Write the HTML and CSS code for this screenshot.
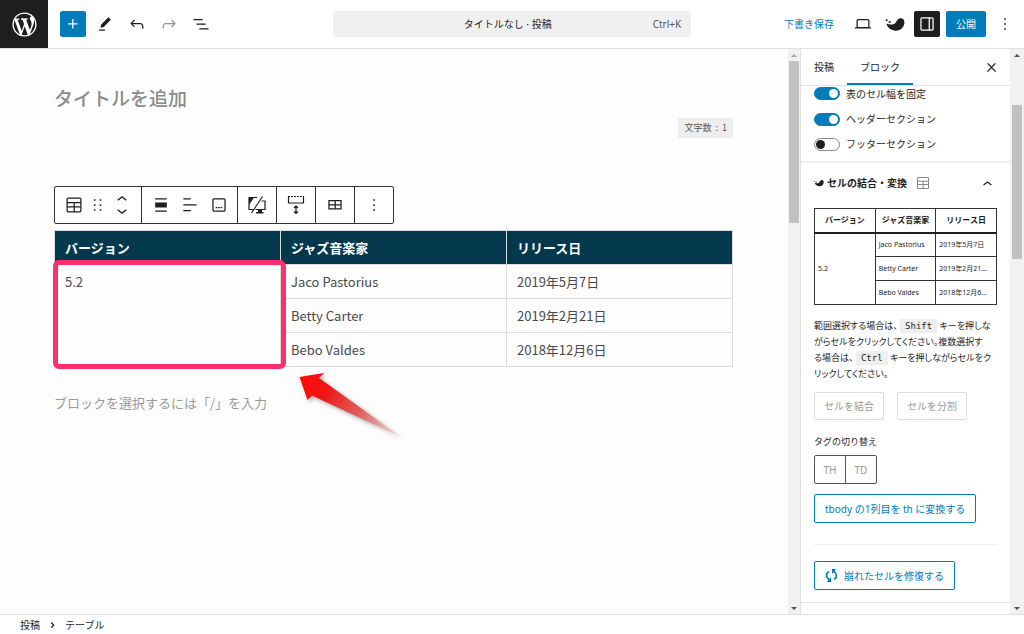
FILE: index.html
```html
<!DOCTYPE html>
<html lang="ja">
<head>
<meta charset="utf-8">
<meta name="viewport" content="width=device-width, initial-scale=1">
<title>タイトルなし · 投稿</title>
<link rel="stylesheet" href="styles.css">
</head>
<body>
<svg class="defs" aria-hidden="true">
  <symbol id="i-table" viewBox="0 0 24 24"><path d="M19 3H5c-1.1 0-2 .9-2 2v14c0 1.1.9 2 2 2h14c1.1 0 2-.9 2-2V5c0-1.1-.9-2-2-2zM5 4.500h14c.3 0 .5.2.5.5v3.500h-15V5c0-.3.2-.5.5-.5zm8 5.500h6.500v3.500H13V10zm-1.500 3.500h-7V10h7v3.500zm-7 5.500v-4h7v4.500H5c-.3 0-.5-.2-.5-.5zm14.500.5h-6V15h6.500v4c0 .3-.2.5-.5.5z"/></symbol>
  <symbol id="i-more" viewBox="0 0 24 24"><path d="M13 19h-2v-2h2v2zm0-6h-2v-2h2v2zm0-6h-2V5h2v2z"/></symbol>
  <symbol id="i-bird" viewBox="0 0 24 24"><path d="M1.500 11.500c4.500 1.800 8.500 1.600 11-.8 1.500-1.700 1.800-4 4.500-5.200 3.300-1.300 6.300.6 6.300 4.500 0 5.500-4.300 10-10.300 10C7.500 20 3.200 16.800 1.500 11.500z"/><circle cx="2" cy="7.500" r="1.200"/><circle cx="5.600" cy="9.600" r="1.300"/></symbol>
</svg>

<header class="topbar">
  <div class="topbar-side">
    <a class="logo" href="#" aria-label="投稿一覧"><svg viewBox="-2 -2 24 24"><path d="M20 10c0-5.510-4.490-10-10-10C4.480 0 0 4.490 0 10c0 5.520 4.480 10 10 10 5.510 0 10-4.480 10-10zM7.780 15.370L4.370 6.220c.55-.02 1.170-.08 1.170-.08.5-.06.44-1.130-.06-1.110 0 0-1.450.11-2.370.11-.18 0-.37 0-.58-.01C4.120 2.690 6.870 1.110 10 1.110c2.330 0 4.450.87 6.050 2.340-.68-.11-1.650.39-1.650 1.580 0 .74.45 1.360.9 2.100.35.61.55 1.360.55 2.460 0 1.490-1.400 5-1.400 5l-3.030-8.370c.54-.02.82-.17.82-.17.5-.05.44-1.250-.06-1.220 0 0-1.440.12-2.380.12-.87 0-2.330-.12-2.330-.12-.5-.03-.56 1.200-.06 1.220l.92.08 1.260 3.410zM17.410 10c.24-.64.74-1.870.43-4.250.7 1.290 1.050 2.710 1.050 4.250 0 3.290-1.730 6.240-4.400 7.780.97-2.590 1.940-5.200 2.920-7.780zM6.100 18.090C3.120 16.650 1.110 13.530 1.110 10c0-1.300.23-2.480.72-3.590C3.250 10.300 4.670 14.200 6.100 18.090zm4.030-6.630l2.580 6.980c-.86.29-1.760.45-2.710.45-.79 0-1.570-.11-2.290-.33.81-2.380 1.620-4.740 2.420-7.100z"/></svg></a>
    <div class="tools">
      <button class="icon-btn primary" aria-label="ブロックを追加"><svg class="icon" viewBox="0 0 24 24"><path d="M11 12.500V17.500H12.500V12.500H17.500V11H12.500V6H11V11H6V12.500H11Z"/></svg></button>
      <button class="icon-btn" aria-label="ツール"><svg class="icon" viewBox="0 0 24 24"><path d="m19 7-3-3-8.500 8.500-1 4 4-1L19 7Zm-7 11.500H5V20h7v-1.500Z"/></svg></button>
      <button class="icon-btn" aria-label="元に戻す"><svg class="icon" viewBox="0 0 24 24"><path d="M18.300 11.700c-.6-.6-1.400-.9-2.300-.9H6.700l2.900-3.300-1.100-1-4.500 5L8.500 16l1-1-2.700-2.700H16c.5 0 .9.2 1.300.5 1 1 1 3.400 1 4.500v.3h1.500v-.2c0-1.500 0-4.300-1.500-5.700z"/></svg></button>
      <button class="icon-btn dim" aria-label="やり直す" disabled><svg class="icon" viewBox="0 0 24 24"><path d="M15.600 6.500l-1.100 1 2.900 3.300H8c-.9 0-1.700.3-2.300.9-1.400 1.500-1.400 4.200-1.400 5.600v.2h1.500v-.3c0-1.100 0-3.500 1-4.500.3-.3.7-.5 1.300-.5h9.200L14.500 15l1.100 1.100 4.600-4.600-4.600-5z"/></svg></button>
      <button class="icon-btn" aria-label="リスト表示"><svg class="icon" viewBox="0 0 24 24"><path d="M3 6h11v1.500H3V6Zm3.500 5.500h11V13h-11v-1.500ZM21 17H10v1.500h11V17Z"/></svg></button>
    </div>
  </div>
  <button class="doc-bar"><span class="doc-title">タイトルなし · 投稿</span><span class="doc-key">Ctrl+K</span></button>
  <div class="topbar-side topbar-end">
    <button class="save">下書き保存</button>
    <button class="icon-btn" aria-label="表示"><svg class="icon" viewBox="0 0 24 24"><path d="M20.500 16h-.7V8c0-1.100-.9-2-2-2H6.200c-1.100 0-2 .9-2 2v8h-.7c-.8 0-1.500.7-1.500 1.500h20c0-.8-.7-1.500-1.500-1.500zM5.700 8c0-.3.2-.5.5-.5h11.600c.3 0 .5.2.5.5v7.600H5.700V8z"/></svg></button>
    <button class="icon-btn" aria-label="SWELL設定"><svg class="icon"><use href="#i-bird"/></svg></button>
    <button class="icon-btn active" aria-label="設定"><svg class="icon" viewBox="0 0 24 24"><path d="M18 4H6c-1.100 0-2 .9-2 2v12c0 1.100.9 2 2 2h12c1.100 0 2-.9 2-2V6c0-1.100-.9-2-2-2zm-4 14.500H6c-.3 0-.5-.2-.5-.5V6c0-.3.2-.5.5-.5h8v13zm4.500-.5c0 .3-.2.5-.5.5h-2.500v-13H18c.3 0 .5.2.5.5v12z"/></svg></button>
    <button class="publish">公開</button>
    <button class="icon-btn" aria-label="オプション"><svg class="icon"><use href="#i-more"/></svg></button>
  </div>
</header>

<div class="workspace">
  <main class="canvas">
    <div class="canvas-body">
      <h1 class="post-title">タイトルを追加</h1>
      <div class="count-row"><span class="count">文字数&nbsp; :&nbsp; 1</span></div>

      <div class="block-toolbar" role="toolbar" aria-label="ブロックツール">
        <div class="group group-block">
          <button aria-label="テーブル"><svg class="icon"><use href="#i-table"/></svg></button>
          <button aria-label="ドラッグ"><svg class="icon" viewBox="0 0 24 24"><path d="M7 7h2V5H7v2zm0 6h2v-2H7v2zm0 6h2v-2H7v2zm7-14v2h2V5h-2zm0 8h2v-2h-2v2zm0 6h2v-2h-2v2z"/></svg></button>
          <div class="movers">
            <button aria-label="上に移動"><svg viewBox="5 7 14 8"><path d="M6.500 12.400L12 8l5.500 4.400-.9 1.200L12 10l-4.500 3.600-1-1.200z"/></svg></button>
            <button aria-label="下に移動"><svg viewBox="5 9 14 8"><path d="M17.500 11.600L12 16l-5.500-4.400.9-1.200L12 14l4.500-3.600 1 1.200z"/></svg></button>
          </div>
        </div>
        <div class="group group-align">
          <button aria-label="配置"><svg class="icon" viewBox="0 0 24 24"><path d="M19 5.500H5V4h14v1.500ZM19 20H5v-1.500h14V20ZM5 9h14v6H5V9Z"/></svg></button>
          <button aria-label="カラムの配置"><svg class="icon" viewBox="0 0 24 24"><path d="M13 5.500H4V4h9v1.500Zm7 7H4V11h16v1.500Zm-7 7H4V18h9v1.500Z"/></svg></button>
          <button aria-label="キャプション"><svg class="icon" viewBox="0 0 24 24"><path fill-rule="evenodd" d="M6 5.500h12a.5.5 0 0 1 .5.5v12a.5.5 0 0 1-.5.5H6a.5.5 0 0 1-.5-.5V6a.5.5 0 0 1 .5-.5ZM4 6a2 2 0 0 1 2-2h12a2 2 0 0 1 2 2v12a2 2 0 0 1-2 2H6a2 2 0 0 1-2-2V6Zm4 10h2v-1.500H8V16Zm5 0h-2v-1.500h2V16Zm1 0h2v-1.500h-2V16Z"/></svg></button>
        </div>
        <div class="group"><button aria-label="デバイス制限"><svg class="icon" viewBox="0 0 20 20"><g fill="none" stroke="currentColor" stroke-width="1.200"><path d="M10 2.500H2v12h4.500M14.500 6H18v8.500H8.500M15.500 1.500 4.500 18"/></g><path d="M2 2.500h5L2 10zM11 14.500h4V17h1.500v1.500H9V17h2z"/></svg></button></div>
        <div class="group"><button aria-label="ブロック下の余白量"><svg class="icon" viewBox="0 0 20 20"><g fill="none" stroke="currentColor" stroke-width="1.200"><path d="M2.500 2v6h15V2M10 11v7.500M8 13l2-2 2 2M8 16.500l2 2 2-2"/><path stroke-dasharray="2 1" d="M2 1.500h16"/></g></svg></button></div>
        <div class="group"><button aria-label="表を編集"><svg class="icon" viewBox="0 0 24 24"><path d="M4 6v11.500h16V6H4zm1.500 1.500h6V11h-6V7.500zm0 8.500v-3.500h6V16h-6zm13 0H13v-3.500h5.500V16zM13 11V7.500h5.500V11H13z"/></svg></button></div>
        <div class="group"><button aria-label="オプション"><svg class="icon"><use href="#i-more"/></svg></button></div>
      </div>

      <div class="table-wrap">
        <table class="data">
          <thead><tr><th>バージョン</th><th>ジャズ音楽家</th><th>リリース日</th></tr></thead>
          <tbody>
            <tr><td rowspan="3" class="marked">5.2</td><td>Jaco Pastorius</td><td>2019年5月7日</td></tr>
            <tr><td>Betty Carter</td><td>2019年2月21日</td></tr>
            <tr><td>Bebo Valdes</td><td>2018年12月6日</td></tr>
          </tbody>
        </table>
        <div class="highlight">
          <svg class="arrow" viewBox="0 0 120 76" aria-hidden="true">
            <defs><linearGradient id="fade" gradientUnits="userSpaceOnUse" x1="8" y1="10" x2="110" y2="70"><stop offset="0" stop-color="#ff0a0a"/><stop offset=".25" stop-color="#f01515"/><stop offset=".6" stop-color="#e06060"/><stop offset="1" stop-color="#f7b5b5" stop-opacity=".3"/></linearGradient></defs>
            <path d="M7.500 11 32 7l-5 5 83 59.500L20 29.500l-4.500 4.500z" fill="url(#fade)"/>
          </svg>
        </div>
      </div>
      <p class="prompt">ブロックを選択するには「/」を入力</p>
    </div>
    <div class="scrollbar canvas-scroll" aria-hidden="true"><i class="up off"></i><div class="track"><div class="thumb"></div></div><i class="down"></i></div>
  </main>

  <aside class="sidebar">
    <div class="panel">
      <div class="tabs" role="tablist">
        <button class="tab" role="tab">投稿</button>
        <button class="tab current" role="tab" aria-selected="true">ブロック</button>
        <button class="close" aria-label="閉じる"><svg viewBox="4 4 16 16"><path stroke="currentColor" d="M13 11.800l6.100-6.300-1-1-6.100 6.200-6.100-6.200-1 1 6.100 6.300-6.500 6.700 1 1 6.500-6.600 6.500 6.600 1-1z"/></svg></button>
      </div>
      <section class="toggles">
        <label><input type="checkbox" role="switch" checked>表のセル幅を固定</label>
        <label><input type="checkbox" role="switch" checked>ヘッダーセクション</label>
        <label><input type="checkbox" role="switch">フッターセクション</label>
      </section>
      <section class="merge">
        <button class="merge-head"><svg class="bird"><use href="#i-bird"/></svg><span>セルの結合・変換</span><svg class="head-table"><use href="#i-table"/></svg><svg class="chevron" viewBox="5 7 14 8"><path d="M6.500 12.400L12 8l5.500 4.400-.9 1.200L12 10l-4.500 3.600-1-1.200z"/></svg></button>
        <table class="mini">
          <thead><tr><th>バージョン</th><th>ジャズ音楽家</th><th>リリース日</th></tr></thead>
          <tbody>
            <tr><td rowspan="3">5.2</td><td>Jaco Pastorius</td><td>2019年5月7日</td></tr>
            <tr><td>Betty Carter</td><td>2019年2月21…</td></tr>
            <tr><td>Bebo Valdes</td><td>2018年12月6…</td></tr>
          </tbody>
        </table>
        <p class="help">範囲選択する場合は、 <kbd>Shift</kbd> キーを押しな<br>がらセルをクリックしてください。複数選択す<br>る場合は、 <kbd>Ctrl</kbd> キーを押しながらセルをク<br>リックしてください。</p>
        <div class="pair"><button class="btn muted" disabled>セルを結合</button><button class="btn muted" disabled>セルを分割</button></div>
        <p class="label">タグの切り替え</p>
        <div class="segmented"><button disabled>TH</button><button disabled>TD</button></div>
        <button class="btn">tbody の1列目を th に変換する</button>
        <hr>
        <button class="btn with-icon"><svg viewBox="0 0 14 14"><g fill="none" stroke="currentColor" stroke-width="1.800"><path d="M4.500 3C1.300 4 .6 7.500 3 10l2 2M9.500 11c3.200-1 3.900-4.500 1.500-7L9 2"/></g><path d="M6.500 8.500V14H2zM7.500 5.500V0H12z"/></svg>崩れたセルを修復する</button>
      </section>
    </div>
    <div class="scrollbar side-scroll" aria-hidden="true"><i class="up"></i><div class="track"><div class="thumb"></div></div><i class="down"></i></div>
  </aside>
</div>

<footer class="crumbs"><a href="#">投稿</a><svg viewBox="0 0 6 8"><path d="M1.500 1l3 3-3 3" fill="none" stroke="currentColor" stroke-width="1.400"/></svg><span>テーブル</span></footer>
</body>
</html>
```
FILE: styles.css
```css
:root {
  --blue: #007cba;
  --ink: #1e1e1e;
  --line: #e0e0e0;
  --navy: #04384c;
  --ui: "Noto Sans", "Noto Sans CJK JP", sans-serif;
  --content: "Noto Sans CJK JP", "Noto Sans", sans-serif;
}

* { box-sizing: border-box; }

body {
  margin: 0;
  height: 100vh;
  display: flex;
  flex-direction: column;
  overflow: hidden;
  background: #fff;
  color: var(--ink);
  font: 10px/16px var(--ui);
}

button {
  margin: 0;
  padding: 0;
  border: 0;
  background: none;
  color: inherit;
  font: inherit;
}

svg { fill: currentColor; flex: none; display: block; }
p { margin: 0; }
a { color: inherit; text-decoration: none; }
.defs { position: absolute; width: 0; height: 0; }
.icon { width: 20px; height: 20px; }

/* Top bar */
.topbar {
  display: grid;
  grid-template-columns: 1fr 35% 1fr;
  align-items: center;
  height: 49px;
  flex: none;
  border-bottom: 1px solid var(--line);
}
.topbar-side { display: flex; align-items: center; }
.logo {
  display: grid;
  place-items: center;
  width: 48px;
  height: 48px;
  background: var(--ink);
  color: #fff;
}
.logo svg { width: 29px; height: 29px; }
.tools { display: flex; gap: 6px; margin-left: 12px; }
.icon-btn {
  display: grid;
  place-items: center;
  width: 26px;
  height: 26px;
  border-radius: 2px;
}
.primary { background: var(--blue); color: #fff; }
.active { background: var(--ink); color: #fff; }
.dim { color: #949494; }
.doc-bar {
  display: flex;
  align-items: center;
  height: 26px;
  padding: 0 10px;
  border-radius: 3px;
  background: #f0f0f0;
}
.doc-title { flex: 1; padding-left: 20px; text-align: center; }
.doc-key { color: #555; }
.topbar-end { justify-content: flex-end; gap: 6px; padding-right: 6px; }
.save { color: var(--blue); margin-right: 10px; }
.publish {
  height: 26px;
  padding: 0 10px;
  border-radius: 2px;
  background: var(--blue);
  color: #fff;
}

/* Editor canvas */
.workspace { flex: 1; min-height: 0; display: flex; }
.canvas { flex: 1; min-width: 0; display: flex; background: #fdfdfd; }
.canvas-body {
  flex: 1;
  min-width: 0;
  padding: 35px 55px 0 54px;
  color: #4a4a4a;
  font-family: var(--content);
}
.post-title { margin: 0; color: #8c8c8c; font-size: 19px; line-height: 28px; font-weight: 500; }
.count-row { display: flex; justify-content: flex-end; margin-top: 6px; }
.count { padding: 2px 6px; background: #eee; color: #555; font-size: 9px; }

.block-toolbar {
  display: inline-flex;
  height: 38px;
  margin-top: 48px;
  border: 1px solid #333;
  border-radius: 2px;
  background: #fff;
  color: var(--ink);
}
.group { display: flex; align-items: center; justify-content: center; width: 39px; }
.group + .group { border-left: 1px solid #333; }
.group-block { width: 86px; gap: 4px; }
.group-align { width: 96px; gap: 9px; }
.movers { display: grid; gap: 6px; width: 20px; justify-items: center; }
.movers svg { width: 12px; height: 7px; }

.table-wrap { position: relative; margin-top: 6px; }
.data {
  width: 100%;
  table-layout: fixed;
  border-collapse: collapse;
  font-size: 13px;
  line-height: 20px;
}
.data th, .data td {
  height: 34px;
  padding: 0 10px;
  border: 1px solid #dcdcdc;
  text-align: left;
}
.data th { background: var(--navy); color: #fff; font-weight: 700; }
.data .marked { vertical-align: top; padding-top: 7px; }
.highlight {
  position: absolute;
  left: -1px;
  right: calc(66% - 1px);
  top: 30px;
  bottom: -2px;
  border: 5px solid #ff2e6c;
  border-radius: 6px;
}
.arrow {
  position: absolute;
  left: 100%;
  top: 100%;
  width: 120px;
  height: 76px;
  margin: 2px 0 0 11px;
  filter: drop-shadow(2px 2px 2px rgb(0 0 0 / 35%));
}
.prompt { margin-top: 26px; color: #999; font-size: 13px; line-height: 20px; }

/* Scroll bars */
.scrollbar { display: flex; flex-direction: column; align-items: center; flex: none; background: #f1f1f1; }
.canvas-scroll { width: 12px; }
.side-scroll { width: 14px; }
.scrollbar i { height: 12px; display: grid; place-items: center; }
.scrollbar i::before { content: ""; border: 3px solid transparent; }
.scrollbar .up::before { border-top: 0; border-bottom-color: #505050; }
.scrollbar .off::before { border-bottom-color: #a3a3a3; }
.scrollbar .down::before { border-bottom: 0; border-top-color: #505050; }
.track { flex: 1; align-self: stretch; padding: 0 1px; }
.thumb { height: 30%; background: #c1c1c1; }
.side-scroll .track { padding: 44px 2px 0; }
.side-scroll .thumb { height: 31%; }

/* Settings sidebar */
.sidebar { width: 224px; flex: none; display: flex; border-left: 1px solid var(--line); }
.panel { flex: 1; min-width: 0; overflow: hidden; }
.tabs { display: flex; height: 37px; border-bottom: 1px solid var(--line); }
.tab { padding: 0 13px; }
.current { box-shadow: inset 0 -2px var(--blue); }
.close { margin: 0 14px 0 auto; }
.close svg { width: 9px; height: 9px; }
.toggles { padding: 0 13px 5px; border-bottom: 2px solid #eee; }
.toggles label { display: flex; align-items: center; gap: 6px; height: 24px; }
.toggles label:first-child { height: 15px; }
.toggles label + label { margin-top: 1px; }
.toggles label:nth-child(2) { margin-top: 6px; }
.toggles input {
  appearance: none;
  width: 26px;
  height: 13px;
  margin: 0;
  padding: 1px;
  display: flex;
  border: 1px solid #888;
  border-radius: 7px;
  background: #fff;
}
.toggles input::before { content: ""; width: 9px; height: 9px; border-radius: 50%; background: var(--ink); }
.toggles input:checked { justify-content: flex-end; background: var(--blue); border-color: var(--blue); }
.toggles input:checked::before { background: #fff; }

.merge { padding: 0 13px 12px; border-bottom: 1px solid var(--line); }
.merge-head {
  display: flex;
  align-items: center;
  gap: 3px;
  width: 100%;
  height: 40px;
  font-weight: 700;
}
.bird { width: 10px; height: 10px; }
.head-table { width: 16px; height: 16px; margin-left: 5px; color: #888; }
.chevron { width: 11px; height: 7px; margin: 0 4px 0 auto; }
.mini {
  width: 100%;
  margin-top: 5px;
  table-layout: fixed;
  border-collapse: collapse;
  font-size: 7px;
  line-height: 12px;
}
.mini th, .mini td { height: 24px; padding: 0 3px; border: 1px solid #333; text-align: left; white-space: nowrap; }
.mini th { padding: 0; text-align: center; font-size: 8px; }
.mini thead { border-bottom: 2px solid var(--ink); }
.help { margin-top: 13px; font-size: 9px; font-feature-settings: "palt"; white-space: nowrap; }
.help kbd { padding: 2px 5px; background: #eee; font: 9px/12px "DejaVu Sans Mono", monospace; }
.btn {
  height: 29px;
  padding: 0 10px;
  border: 1px solid var(--blue);
  border-radius: 2px;
  color: var(--blue);
}
.btn.muted { height: 28px; padding: 0 9px; border-color: #ddd; color: #999; }
.pair { display: flex; gap: 13px; margin-top: 10px; }
.label { margin: 14px 0 5px; font-size: 9px; }
.segmented { display: flex; width: 63px; margin-bottom: 10px; border: 1px solid #555; border-radius: 2px; }
.segmented button { flex: 1; height: 27px; color: #999; }
.segmented button + button { border-left: 1px solid #555; }
hr { margin: 21px 0 16px; border: 0; border-top: 1px solid #eee; }
.with-icon { display: flex; align-items: center; gap: 6px; }
.with-icon svg { width: 13px; height: 13px; }

/* Breadcrumb */
.crumbs {
  display: flex;
  align-items: center;
  gap: 10px;
  flex: none;
  height: 20px;
  padding-left: 20px;
  border-top: 1px solid var(--line);
}
.crumbs svg { width: 5px; height: 8px; }
```
